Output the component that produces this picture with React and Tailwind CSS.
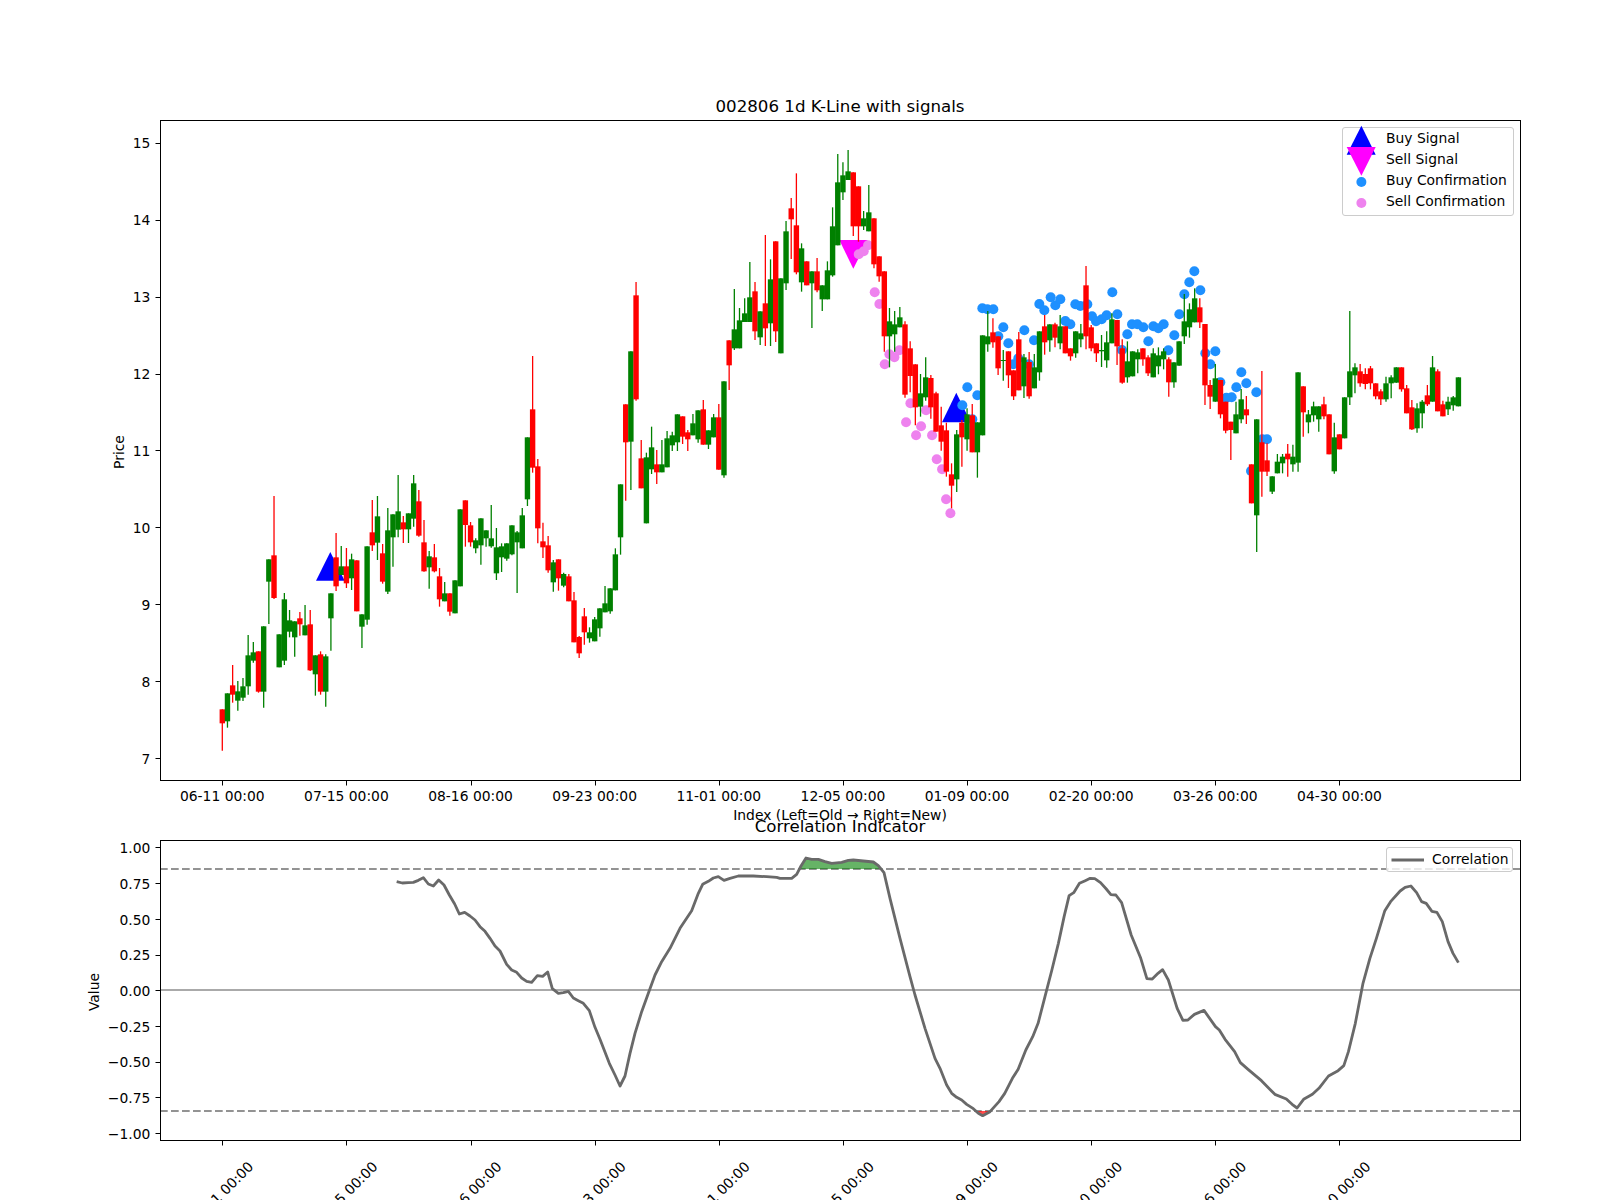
import React from "react";

// candle rows: [red?, bodyTop, bodyBottom, high, low], values read at 3x with offset oy
const blocks = [
  [400, [
    [1,928,970,928,1052],[0,880,964,880,983],[1,856,884,795,908],[0,874,902,843,932],[0,859,893,834,903],
    [0,766,859,705,884],[0,757,782,726,788],[1,754,875,754,878],[0,679,875,679,923],[0,478,545,478,672],
    [1,466,594,288,597],[0,703,802,703,802],[0,598,782,579,795],[0,661,695,630,712],[0,664,712,664,770],
    [1,655,673,636,707],[0,676,706,615,706],[1,673,811,630,813],[0,766,823,766,887],[1,763,875,754,884],
    [0,769,875,763,920],[0,580,655,580,752],[1,472,559,399,573],[0,499,525,438,525],[1,499,550,444,564],
    [0,478,535,461,570],[1,481,634,481,634],[0,643,680,643,744],[0,439,659,439,674],[1,397,436,300,453],
    [0,349,428,288,480],[1,460,545,432,551],[0,391,575,324,582],[0,343,412,343,500],[0,334,389,225,412],
    [1,367,388,348,429],[0,340,388,340,429],[0,250,356,225,380],[1,304,407,270,410],[1,427,514,360,515],
    [0,469,502,453,566],[1,472,514,432,517],[1,529,598,504,620],[0,580,604,546,604],[1,580,635,580,647],
    [0,541,640,541,640],[0,328,559,328,559],[1,301,375,301,440],[1,376,427,366,440],[0,421,445,415,460],
    [0,355,436,355,494],[0,391,415,391,440],[0,415,439,315,443],[0,442,520,384,540],[0,439,472,430,516],
    [0,430,476,430,482],[0,376,463,376,466],[0,397,427,393,579],[0,346,445,324,445],[0,112,298,112,318],
    [1,28,203,-132,218],[1,199,385,177,430],
  ]],
  [470, [
    [1,214,232,158,264],[1,226,301,198,308],[0,277,337,270,365],[1,268,325,268,362],[0,312,347,308,352],
    [1,319,394,312,394],[1,391,517,366,517],[1,501,550,498,564],[1,439,487,414,524],[0,487,505,472,518],
    [0,448,514,441,514],[0,415,475,415,500],[0,400,427,348,427],[0,355,424,355,431],[0,253,361,235,361],
    [0,43,202,43,254],
  ]],
  [130, [
    [1,823,937,823,1112],[0,664,935,664,1080],[1,496,808,456,812],[1,985,1075,930,1075],[0,982,1180,968,1180],
    [0,952,1018,890,1032],[1,1003,1027,960,1062],[0,1003,1027,930,1027],[0,925,1012,903,1012],[0,916,946,905,963],
    [0,853,937,853,963],[1,859,920,859,942],[1,907,928,900,963],[0,880,916,852,916],[0,841,928,841,938],
    [1,838,944,810,944],[0,901,944,901,957],[0,862,922,852,922],[1,862,1019,822,1019],[0,754,1036,754,1043],
    [1,631,706,631,780],[0,598,655,477,660],[0,571,655,534,655],[0,550,576,505,576],[0,502,576,396,576],
    [1,484,604,456,630],[0,544,622,544,645],[1,520,595,315,648],[0,448,580,388,648],[1,334,604,334,636],
    [0,445,670,445,670],[0,304,460,273,480],[1,235,268,204,387],[1,286,427,130,433],[0,355,457,340,485],
    [1,394,466,394,466],[0,424,460,424,594],[1,424,481,384,487],[0,466,508,466,543],[0,421,508,394,508],
    [0,289,436,232,440],[0,157,346,72,346],[0,136,187,97,210],[0,124,150,60,150],[1,127,289,127,318],
    [1,169,289,169,335],[0,265,289,243,300],[0,247,304,165,304],[1,265,403,265,415],[1,379,439,379,455],
    [1,424,619,424,665],[0,574,619,534,712],[0,583,613,543,665],[0,562,592,531,592],[1,583,794,574,803],
    [1,655,738,634,787],[1,703,832,703,886],[0,790,830,732,860],[0,742,802,682,812],
  ]],
  [340, [
    [1,114,202,105,236],[1,160,275,155,275],[1,256,305,200,332],[1,271,395,248,410],[1,403,437,370,505],
    [0,283,418,270,456],[1,248,292,240,380],[0,223,298,205,332],[1,226,337,192,337],[0,247,337,247,413],
  ]],
  [250, [
    [0,256,556,256,556],[0,259,283,183,305],[1,247,277,205,293],[1,259,355,259,375],[0,330,333,300,392],
    [1,304,376,304,414],[1,361,439,361,450],[1,268,421,246,421],[0,322,409,312,444],[1,336,439,306,446],
    [0,352,415,312,415],[0,244,367,244,392],[1,229,277,195,314],[0,223,271,223,305],[1,223,263,218,292],
    [0,229,280,195,298],[1,229,310,229,310],[1,295,319,295,332],[0,244,310,244,323],[0,250,268,222,292],
    [1,106,259,48,298],[1,232,295,225,304],[1,280,310,280,336],[0,300,304,255,351],[0,277,331,244,353],
    [0,208,280,190,280],[1,210,289,210,345],[1,295,398,268,401],[0,334,382,274,398],[0,304,379,304,379],
    [0,307,328,298,370],[1,295,328,295,347],[1,322,370,316,378],[0,310,382,295,382],[0,316,349,292,373],
    [0,304,328,295,358],[1,328,397,322,440],[0,337,397,337,413],[0,274,347,274,347],[0,214,259,132,282],
    [0,178,232,160,263],[0,145,217,115,217],[1,172,217,145,234],
  ]],
  [100, [
    [1,672,856,672,915],[1,855,890,840,927],[0,835,905,792,905],[1,840,943,840,955],[1,905,992,905,1000],
    [1,965,990,965,1080],[0,943,1000,905,1000],[0,898,958,867,970],[1,928,946,888,972],[1,1093,1210,1093,1210],
    [0,958,1246,958,1356],[1,1027,1115,813,1190],[1,1081,1115,1030,1128],[0,1129,1175,1129,1182],[0,1085,1120,1062,1120],
    [0,1070,1090,1062,1120],[1,1061,1078,1032,1130],[0,1070,1093,1034,1115],[0,817,1088,817,1115],[1,859,937,859,1010],
    [0,943,967,930,1000],[0,919,946,905,965],[0,919,958,919,995],[1,913,949,890,958],[1,943,1063,943,1063],
    [0,1012,1114,968,1121],[1,1003,1048,1003,1048],[0,892,1015,892,1015],[0,814,892,633,915],[0,802,826,790,880],
    [1,814,850,792,860],[1,822,852,805,868],[1,805,850,798,868],[1,850,889,850,898],[1,874,898,868,915],
    [0,850,898,830,905],[0,832,850,826,895],[0,802,848,802,848],[1,802,868,802,875],[1,865,940,855,940],
    [1,922,988,900,990],[0,925,985,910,998],[0,905,940,900,985],[1,886,913,855,918],[0,802,905,768,905],
    [1,814,934,808,934],[1,913,949,902,949],[0,905,928,890,945],[0,892,916,888,932],[0,832,919,832,919],
  ]],
];

const candles = blocks.flatMap(([oy, rows]) =>
  rows.map(([red, top, bot, hi, lo]) => ({
    red,
    top: oy + top / 3,
    bot: oy + bot / 3,
    hi: oy + hi / 3,
    lo: oy + lo / 3,
  }))
);

const slot = (i) => 222.3 + 5.172 * i;

const xTicks = ["06-11", "07-15", "08-16", "09-23", "11-01", "12-05", "01-09", "02-20", "03-26", "04-30"].map((d, k) => ({
  x: slot(k * 24),
  label: `${d} 00:00`,
}));

const priceTicks = [7, 8, 9, 10, 11, 12, 13, 14, 15].map((p) => ({ y: 758.3 - (p - 7) * 76.95, label: String(p) }));
const corrTicks = ["1.00", "0.75", "0.50", "0.25", "0.00", "−0.25", "−0.50", "−0.75", "−1.00"].map((label, k) => ({
  y: 847.4 + k * 35.7,
  label,
}));

// confirmation dots
const blueDots = [
  [97,175],[112,178],[130,178],[52,412],[82,436],[37,466],[67,508],[145,259],[160,232],[175,280],[190,343],[205,325],[237,343],
  [223,241],[252,271],[268,162],[283,181],[302,142],[316,166],[331,148],[346,213],[361,223],[376,163],[391,168],[412,163],
  [426,199],[438,214],[455,208],[470,196],[487,127],[502,193],[532,253],[546,223],[562,223],[580,232],[610,229],[625,235],
  [641,223],[595,274],[516,300],[655,301],[673,256],[688,193],[703,133],[718,97],[733,64],[751,121],[766,310],[781,343],
  [796,304],[811,397],[829,443],[845,442],[859,412],[874,367],[889,400],[919,427],[937,568],[951,568],[903,663],
].map(([x, y]) => [950 + x / 3, 250 + y / 3]);

const pinkDots = [
  [973,487],[987,522],[1017,673],[1032,682],[1047,661],[1003,703],[1080,820],[1067,877],[1127,841],[1097,916],[1112,889],
  [1145,916],[1159,988],[1175,1018],[1187,1108],[1200,1150],[925,373],[940,364],[953,346],
].map(([x, y]) => [550.4 + x / 3, 130 + y / 3]);

// correlation curve, three reads stitched together
const curve = [
  ...[[1190,365],[1207,369],[1225,368],[1240,367],[1255,361],[1270,353],[1285,372],[1300,378],[1316,360],[1332,375],[1348,405],
    [1364,432],[1378,462],[1394,457],[1410,468],[1425,480],[1440,500],[1455,514],[1470,535],[1485,558]].map(([x, y]) => [x / 3, 760 + y / 3]),
  ...[[0,513],[20,553],[35,570],[50,577],[65,594],[80,604],[95,607],[112,587],[128,589],[143,576],[157,626],[175,640],[190,638],
    [205,634],[220,654],[235,662],[250,670],[268,692],[285,742],[300,778],[328,850],[345,885],[360,918],[375,888],[390,820],
    [405,760],[425,695],[445,640],[465,585],[485,545],[510,505],[540,445],[575,392],[595,340],[608,313],[625,304],[640,294],
    [655,290],[672,301],[690,295],[715,288],[760,288],[800,290],[830,292],[840,295],[875,295],[890,283],[903,258],[918,234],
    [935,238],[955,238],[975,245],[995,250],[1025,247],[1045,241],[1060,240],[1090,243],[1120,246],[1135,257],[1152,278],
    [1170,355],[1200,475],[1230,590],[1245,645],[1275,745],[1305,835],[1320,865],[1340,915],[1355,940],[1370,952],[1385,960],
    [1400,973],[1420,986],[1435,1000],[1448,1007],[1470,995]].map(([x, y]) => [500 + x / 3, 780 + y / 3]),
  ...[[0,965],[15,940],[35,895],[50,868],[70,810],[88,770],[102,730],[120,650],[138,570],[155,490],[170,410],[183,347],[195,338],
    [210,310],[225,302],[238,295],[250,296],[265,308],[280,327],[292,344],[305,345],[320,368],[345,465],[370,535],[386,596],
    [400,597],[415,580],[427,569],[442,600],[465,685],[480,721],[493,720],[510,703],[535,691],[565,740],[575,750],[590,778],
    [615,815],[630,848],[650,868],[685,902],[720,943],[750,957],[765,973],[778,984],[795,958],[818,943],[835,925],[860,888],
    [885,872],[900,857],[912,815],[930,730],[950,610],[968,535],[985,475],[1007,392],[1022,365],[1047,333],[1060,322],
    [1075,318],[1090,338],[1103,365],[1115,370],[1130,394],[1143,397],[1157,425],[1172,485],[1185,520],[1199,548]].map(([x, y]) => [999 + x / 2.61, 780 + y / 3]),
];

const greenFill = [[897,267],[903,258],[918,234],[935,238],[955,238],[975,245],[995,250],[1025,247],[1045,241],[1060,240],[1090,243],[1120,246],[1135,257],[1148,267]];
const redFill = [[1426,993],[1435,1000],[1448,1007],[1470,995],[1474,993]];
const toPoints = (pts) => pts.map(([x, y]) => `${x},${y}`).join(" ");
const fillPoints = (pts) => toPoints(pts.map(([x, y]) => [500 + x / 3, 780 + y / 3]));

function Spine({ x, y, w, h }) {
  return <rect x={x + 0.5} y={y + 0.5} width={w} height={h} fill="none" stroke="#000" strokeWidth="1" />;
}

function YAxis({ ticks, left }) {
  return ticks.map((t) => (
    <g key={t.label}>
      <line x1={left - 4.5} x2={left} y1={Math.round(t.y) + 0.5} y2={Math.round(t.y) + 0.5} stroke="#000" strokeWidth="1" />
      <text x={left - 9.7} y={t.y + 5.7} textAnchor="end" fill="#000" className="text-[13.89px]">
        {t.label}
      </text>
    </g>
  ));
}

function KLineChart() {
  return (
    <div className="relative h-[660px] w-[1360px]">
      <svg width="1360" height="660" viewBox="160 120 1360 660" className="overflow-visible">
        <polygon points="330.3,552 316,580.7 344.7,580.7" fill="#0000ff" />
        <polygon points="956.3,392.7 942,422.3 970.7,422.3" fill="#0000ff" />
        <polygon points="839.3,240 867.7,240 853.3,268.7" fill="#ff00ff" />
        {blueDots.map(([x, y], i) => (
          <circle key={i} cx={x} cy={y} r="5" fill="#1e90ff" />
        ))}
        {pinkDots.map(([x, y], i) => (
          <circle key={i} cx={x} cy={y} r="5" fill="#ee82ee" />
        ))}
        {candles.map((c, i) => {
          const color = c.red ? "#ff0000" : "#008000";
          const x = slot(i);
          return (
            <g key={i}>
              <line x1={x} x2={x} y1={c.hi} y2={c.lo} stroke={color} strokeWidth="1.3" />
              <rect x={x - 2.7} y={c.top} width="5.4" height={c.bot - c.top} fill={color} />
            </g>
          );
        })}
        <Spine x={160} y={120} w={1360} h={660} />
        <YAxis ticks={priceTicks} left={160} />
        {xTicks.map((t) => (
          <g key={t.label}>
            <line x1={Math.round(t.x) + 0.5} x2={Math.round(t.x) + 0.5} y1="780.5" y2="785.5" stroke="#000" strokeWidth="1" />
            <text x={t.x} y="800.5" textAnchor="middle" fill="#000" className="text-[13.89px]">
              {t.label}
            </text>
          </g>
        ))}
        <text x="840" y="820" textAnchor="middle" fill="#000" className="text-[13.89px]">
          Index (Left=Old → Right=New)
        </text>
        <text transform="rotate(-90 124 452)" x="124" y="452" textAnchor="middle" fill="#000" className="text-[13.89px]">
          Price
        </text>
      </svg>

      <div className="absolute left-[1182px] top-[7px] h-[89px] w-[172px] rounded-[3px] border border-[#cccccc] bg-white/80 text-[13.89px] leading-[21px]">
        {[
          { label: "Buy Signal", mark: <polygon points="18.4,-2.3 3.7,26.7 32.7,26.7" fill="#0000ff" /> },
          { label: "Sell Signal", mark: <polygon points="3.7,-2 32.7,-2 18.4,26.7" fill="#ff00ff" /> },
          { label: "Buy Confirmation", mark: <circle cx="18.4" cy="12" r="5" fill="#1e90ff" /> },
          { label: "Sell Confirmation", mark: <circle cx="18.4" cy="12" r="5" fill="#ee82ee" /> },
        ].map((row) => (
          <div key={row.label} className="flex h-[21px] items-start">
            <svg width="43" height="21" className="shrink-0 overflow-visible">
              {row.mark}
            </svg>
            <span>{row.label}</span>
          </div>
        ))}
      </div>
    </div>
  );
}

function CorrelationChart() {
  return (
    <div className="relative h-[300px] w-[1360px]">
      <svg width="1360" height="300" viewBox="160 840 1360 300" className="overflow-visible">
        <line x1="160" x2="1520" y1="990" y2="990" stroke="#aaaaaa" strokeWidth="2" />
        <line x1="160" x2="1520" y1="869" y2="869" stroke="#808080" strokeOpacity="0.85" strokeWidth="2" strokeDasharray="7.7 3.3" />
        <line x1="160" x2="1520" y1="1111" y2="1111" stroke="#808080" strokeOpacity="0.85" strokeWidth="2" strokeDasharray="7.7 3.3" />
        <polygon points={fillPoints(greenFill)} fill="#008000" fillOpacity="0.6" />
        <polygon points={fillPoints(redFill)} fill="#ff0000" fillOpacity="0.7" />
        <polyline points={toPoints(curve)} fill="none" stroke="#696969" strokeWidth="2.8" strokeLinejoin="round" />
        <Spine x={160} y={840} w={1360} h={300} />
        <YAxis ticks={corrTicks} left={160} />
        {xTicks.map((t) => (
          <g key={t.label}>
            <line x1={Math.round(t.x) + 0.5} x2={Math.round(t.x) + 0.5} y1="1140.5" y2="1145.5" stroke="#000" strokeWidth="1" />
            <text transform={`rotate(-45 ${t.x - 1.5} 1194)`} x={t.x - 1.5} y="1199" textAnchor="middle" fill="#000" className="text-[13.89px]">
              {t.label}
            </text>
          </g>
        ))}
        <text transform="rotate(-90 99 992)" x="99" y="992" textAnchor="middle" fill="#000" className="text-[13.89px]">
          Value
        </text>
      </svg>

      <div className="absolute left-[1226px] top-[7px] flex h-[25px] w-[127px] items-center rounded-[3px] border border-[#cccccc] bg-white/80 text-[13.89px] leading-[21px]">
        <svg width="45" height="4" className="shrink-0">
          <line x1="4.5" x2="37" y1="2" y2="2" stroke="#696969" strokeWidth="2.8" />
        </svg>
        <span>Correlation</span>
      </div>
    </div>
  );
}

export default function App() {
  return (
    <div className="h-[1200px] w-[1600px] overflow-hidden bg-white pl-[160px] font-['DejaVu_Sans',sans-serif] text-black">
      <div className="flex h-[120px] w-[1360px] items-end justify-center pb-[3px] text-[16.67px] leading-[20px]">
        002806 1d K-Line with signals
      </div>
      <KLineChart />
      <div className="relative flex h-[60px] w-[1360px] items-end justify-center pb-[3px] text-[16.67px] leading-[20px]">
        Correlation Indicator
      </div>
      <CorrelationChart />
    </div>
  );
}
